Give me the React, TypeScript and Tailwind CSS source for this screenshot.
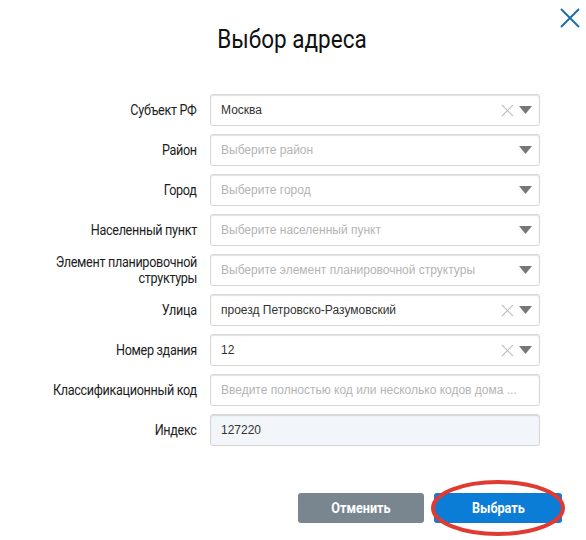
import React from "react";

type Row = {
  label: React.ReactNode;
  value?: string;
  placeholder?: string;
  clear?: boolean;
  arrow?: boolean;
  disabled?: boolean;
};

const rows: Row[] = [
  { label: "Субъект РФ", value: "Москва", clear: true, arrow: true },
  { label: "Район", placeholder: "Выберите район", arrow: true },
  { label: "Город", placeholder: "Выберите город", arrow: true },
  { label: "Населенный пункт", placeholder: "Выберите населенный пункт", arrow: true },
  {
    label: (
      <>
        Элемент планировочной
        <br />
        структуры
      </>
    ),
    placeholder: "Выберите элемент планировочной структуры",
    arrow: true,
  },
  { label: "Улица", value: "проезд Петровско-Разумовский", clear: true, arrow: true },
  { label: "Номер здания", value: "12", clear: true, arrow: true },
  { label: "Классификационный код", placeholder: "Введите полностью код или несколько кодов дома ..." },
  { label: "Индекс", value: "127220", disabled: true },
];

function ClearIcon() {
  return (
    <svg width="13" height="13" viewBox="0 0 13 13" className="shrink-0">
      <path d="M1 1 L12 12 M12 1 L1 12" stroke="#c2c2c2" strokeWidth="1.2" fill="none" />
    </svg>
  );
}

function ArrowIcon() {
  return (
    <svg width="13" height="8" viewBox="0 0 13 8" className="shrink-0">
      <path d="M0 0 H13 L6.5 8 Z" fill="#777777" />
    </svg>
  );
}

export default function App() {
  return (
    <div className="relative w-[586px] h-[540px] bg-white overflow-hidden" style={{ fontFamily: "Roboto, 'Liberation Sans', sans-serif" }}>
      <button className="absolute left-[560px] top-[8px] w-[20px] h-[20px]">
        <svg width="20" height="20" viewBox="0 0 20 20">
          <path d="M1 1 L19 19 M19 1 L1 19" stroke="#1f6fa6" strokeWidth="2" fill="none" />
        </svg>
      </button>

      <h1 className="pt-[25px] h-[55px] flex justify-center text-[25px] leading-[30px] text-[#111] font-normal pr-[2px]">
        <span className="inline-block scale-x-[0.9]">Выбор адреса</span>
      </h1>

      <div className="mt-[39px] flex flex-col gap-[8px]">
        {rows.map((r, i) => (
          <div key={i} className="flex items-center gap-[13px]">
            <div className="w-[197px] flex justify-end">
              <div className="text-right text-[14px] leading-[16px] text-[#1c1c1c] tracking-[-0.35px] whitespace-nowrap origin-right scale-x-[0.9]">
                {r.label}
              </div>
            </div>
            <div
              className={
                "w-[330px] h-[32px] flex items-center pl-[10px] pr-[7px] rounded-[3px] border border-[#d6d6d6] shadow-[inset_0_1px_1px_rgba(0,0,0,0.12)] " +
                (r.disabled ? "bg-[#f2f6fb]" : "bg-white")
              }
              style={{ fontFamily: "'Liberation Sans', Arial, sans-serif" }}
            >
              <span
                className={
                  "flex-1 text-[12px] whitespace-nowrap overflow-hidden " +
                  (r.value ? "text-[#333]" : "text-[#b4b4b4]")
                }
              >
                {r.value ?? r.placeholder}
              </span>
              {r.clear && (
                <span className="mr-[5px] flex">
                  <ClearIcon />
                </span>
              )}
              {r.arrow && <ArrowIcon />}
            </div>
          </div>
        ))}
      </div>

      <div className="mt-[47px] flex justify-end gap-[10px] pr-[24px]">
        <button className="w-[126px] h-[30px] rounded-[3px] bg-[#7a868f] text-white text-[14px] font-bold">
          <span className="inline-block scale-x-[0.9]">Отменить</span>
        </button>
        <div className="relative">
          <button className="w-[128px] h-[30px] rounded-[3px] bg-[#0c7dd6] text-white text-[14px] font-bold">
            <span className="inline-block scale-x-[0.9]">Выбрать</span>
          </button>
          <svg
            className="absolute left-[-3px] top-[-14px] pointer-events-none"
            width="138"
            height="60"
            viewBox="0 0 138 60"
          >
            <ellipse cx="67" cy="29" rx="65" ry="26" stroke="#e03a33" strokeWidth="4" fill="none" />
          </svg>
        </div>
      </div>
    </div>
  );
}
